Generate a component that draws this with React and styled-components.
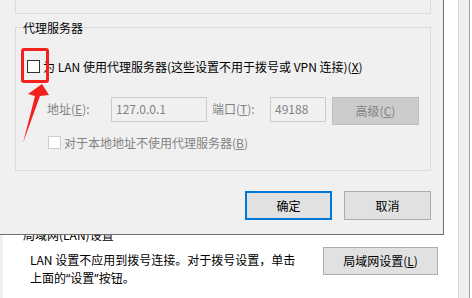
import React from "react";
import styled, { createGlobalStyle } from "styled-components";

const GlobalStyle = createGlobalStyle`
	html, body {
		margin: 0;
		padding: 0;
		background: #ffffff;
	}
	body {
		width: 472px;
		height: 298px;
		overflow: hidden;
		font-family: "Noto Sans CJK SC", "Noto Sans", sans-serif;
		font-size: 12px;
		color: #000000;
	}
`;

const Screen = styled.div`
	position: relative;
	display: flex;
	width: 472px;
	height: 298px;
	overflow: hidden;
`;

const LeftEdge = styled.div`
	width: 3px;
	background: #f0f0f0;
`;

const TabPage = styled.div`
	width: 456px;
	box-sizing: border-box;
	padding: 227px 0 0 20px;
	background: #ffffff;
	border-right: 1px solid #d4d4d4;
`;

const WindowFrame = styled.div`
	width: 10px;
	background: #f0f0f0;
	border-right: 1px solid #a0a0a0;
`;

const SectionTitle = styled.div`
	line-height: 16px;
`;

const LanRow = styled.div`
	display: flex;
	align-items: flex-start;
	margin-top: 4px;
`;

const LanText = styled.div`
	width: 293px;
	padding: 4px 0 0 7px;
	line-height: 18px;
	white-space: nowrap;
`;

const Quote = styled.span`
	font-family: "Noto Sans", sans-serif;
`;

const Button = styled.div`
	display: flex;
	align-items: center;
	justify-content: center;
	box-sizing: border-box;
	width: ${(p) => p.$w}px;
	height: ${(p) => p.$h}px;
	background: ${(p) => (p.$disabled ? "#cccccc" : "#e1e1e1")};
	border: ${(p) =>
		p.$default ? "2px solid #0078d7" : p.$disabled ? "1px solid #bfbfbf" : "1px solid #adadad"};
	color: ${(p) => (p.$disabled ? "#838383" : "#000000")};
	line-height: 16px;
	white-space: nowrap;
`;

/* the proxy dialog lies over the Internet Options page */
const Dialog = styled.div`
	position: absolute;
	left: 0;
	top: 0;
	width: 444px;
	height: 235px;
	box-sizing: border-box;
	padding: 0 12px 0 15px;
	background: #f0f0f0;
	border-right: 1px solid #6e6e6e;
	border-bottom: 1px solid #6e6e6e;
	display: flex;
	flex-direction: column;
`;

const TopGroup = styled.div`
	height: 13px;
	border: 1px solid #dcdcdc;
	border-top: none;
`;

const GroupBox = styled.div`
	margin-top: 13px;
	border: 1px solid #dcdcdc;
	padding: 0 0 20px 11px;
	display: flex;
	flex-direction: column;
`;

const Legend = styled.div`
	align-self: flex-start;
	margin: -8px 0 0 -5px;
	padding: 0 1px;
	line-height: 16px;
	background: #f0f0f0;
`;

const CheckRow = styled.div`
	display: flex;
	align-items: center;
	gap: 3px;
	height: 16px;
	margin-top: ${(p) => p.$top}px;
	padding-left: ${(p) => p.$indent || 0}px;
	color: ${(p) => (p.$disabled ? "#838383" : "#000000")};
	white-space: nowrap;
`;

const Box = styled.span`
	display: inline-block;
	box-sizing: border-box;
	width: 13px;
	height: 13px;
	background: #ffffff;
	border: 1px solid ${(p) => (p.$disabled ? "#cccccc" : "#333333")};
`;

const AddressRow = styled.div`
	display: flex;
	align-items: flex-start;
	margin-top: 23px;
	padding-left: 20px;
	color: #838383;
`;

const FieldLabel = styled.div`
	width: ${(p) => p.$w}px;
	line-height: 23px;
	white-space: nowrap;
`;

const TextBox = styled.div`
	box-sizing: border-box;
	width: ${(p) => p.$w}px;
	height: 25px;
	margin-right: ${(p) => p.$gap}px;
	padding: 0 4px;
	border: 1px solid #cccccc;
	background: #f0f0f0;
	line-height: 21px;
	color: #838383;
`;

const DialogButtons = styled.div`
	display: flex;
	justify-content: flex-end;
	gap: 12px;
	margin-top: 20px;
`;

const Highlight = styled.div`
	position: absolute;
	left: 21px;
	top: 48px;
	width: 28px;
	height: 35px;
	box-sizing: border-box;
	border: 3px solid #f2211c;
	border-radius: 3px;
`;

const Arrow = styled.svg`
	position: absolute;
	left: 0;
	top: 0;
`;

export default function App() {
	return (
		<>
			<GlobalStyle />
			<Screen>
				<LeftEdge />
				<TabPage>
					<SectionTitle>局域网(LAN)设置</SectionTitle>
					<LanRow>
						<LanText>
							LAN 设置不应用到拨号连接。对于拨号设置，单击
							<br />
							上面的<Quote>“</Quote>设置<Quote>”</Quote>按钮。
						</LanText>
						<Button $w={115} $h={28}>
							局域网设置(<u>L</u>)
						</Button>
					</LanRow>
				</TabPage>
				<WindowFrame />

				<Dialog>
					<TopGroup />
					<GroupBox>
						<Legend>代理服务器</Legend>
						<CheckRow $top={22}>
							<Box />
							<span>
								为 LAN 使用代理服务器(这些设置不用于拨号或 VPN 连接)(<u>X</u>)
							</span>
						</CheckRow>
						<AddressRow>
							<FieldLabel $w={64}>
								地址(<u>E</u>):
							</FieldLabel>
							<TextBox $w={96} $gap={5}>127.0.0.1</TextBox>
							<FieldLabel $w={58}>
								端口(<u>T</u>):
							</FieldLabel>
							<TextBox $w={56} $gap={6}>49188</TextBox>
							<Button $w={87} $h={28} $disabled>
								高级(<u>C</u>)
							</Button>
						</AddressRow>
						<CheckRow $top={9} $indent={21} $disabled>
							<Box $disabled />
							<span>
								对于本地地址不使用代理服务器(<u>B</u>)
							</span>
						</CheckRow>
					</GroupBox>
					<DialogButtons>
						<Button $w={87} $h={29} $default>
							确定
						</Button>
						<Button $w={87} $h={29}>
							取消
						</Button>
					</DialogButtons>
				</Dialog>

				<Highlight />
				<Arrow width="60" height="150" viewBox="0 0 60 150">
					<polygon
						points="42,84 49,95 40,96 23,143 35,96 28,94"
						fill="#f2211c"
					/>
				</Arrow>
			</Screen>
		</>
	);
}
